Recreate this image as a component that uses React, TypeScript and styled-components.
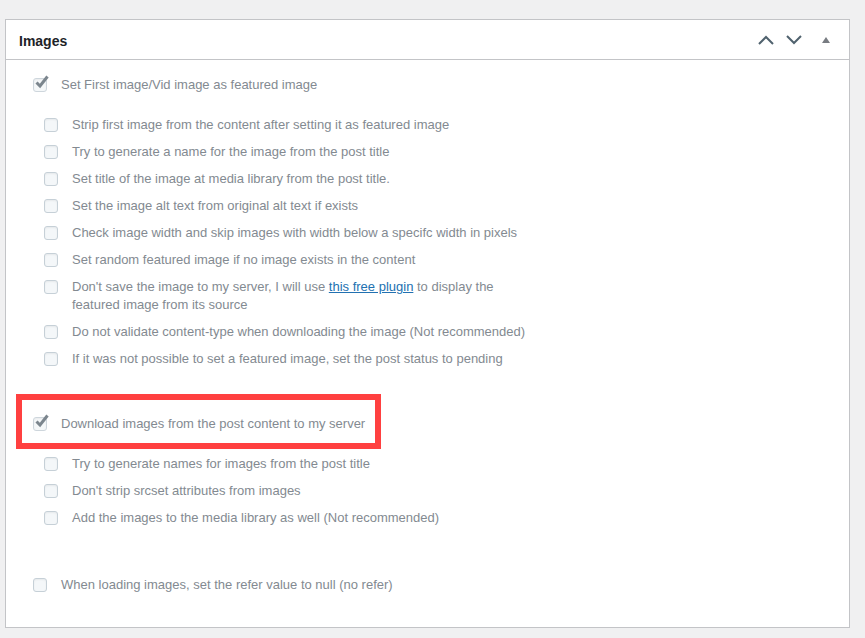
import React, { FC } from "react";
import styled, { createGlobalStyle } from "styled-components";

const GlobalStyle = createGlobalStyle`
    html, body {
        margin: 0;
        padding: 0;
        background: #f0f0f1;
    }
    body {
        font-family: "Liberation Sans", Arial, sans-serif;
    }
`;

const Panel = styled.div`
    margin: 19px 0 0 5px;
    width: 843px;
    height: 607px;
    background: #ffffff;
    border: 1px solid #c3c4c7;
    box-sizing: content-box;
    display: flex;
    flex-direction: column;
`;

const Header = styled.div`
    height: 39px;
    border-bottom: 1px solid #c3c4c7;
    display: flex;
    align-items: center;
    justify-content: space-between;
    padding: 0 14px 0 13px;
`;

const Title = styled.h2`
    margin: 0;
    font-size: 14px;
    font-weight: 700;
    color: #1d2327;
    padding-top: 2px;
`;

const Controls = styled.div`
    display: flex;
    align-items: center;
    gap: 10px;
`;

const IconButton = styled.span<{ $small?: boolean }>`
    display: flex;
    align-items: center;
    justify-content: center;
    width: 18px;
    height: 18px;
    margin-left: ${p => (p.$small ? "4px" : "0")};
`;

const Body = styled.div`
    padding: 16px 0 0 21px;
    display: flex;
    flex-direction: column;
`;

const Section = styled.div<{ $top?: number }>`
    margin-top: ${p => p.$top ?? 0}px;
    display: flex;
    flex-direction: column;
`;

const SubList = styled.div<{ $top?: number }>`
    margin-top: ${p => p.$top ?? 0}px;
    padding-left: 11px;
    display: flex;
    flex-direction: column;
    gap: 9px;
`;

const Highlight = styled.div`
    margin-left: -11px;
    width: 365px;
    box-sizing: border-box;
    border: 6px solid #ff4040;
    padding: 15px 0 10px 5px;
`;

const Row = styled.label`
    display: flex;
    align-items: flex-start;
    gap: 14px;
    padding-left: 6px;
`;

const Box = styled.span<{ $checked?: boolean }>`
    position: relative;
    flex: none;
    width: 12px;
    height: 12px;
    margin-top: 2px;
    border: 1px solid #c6d0d7;
    border-radius: 3px;
    background: #f4f7f9;
    box-shadow: inset 0 1px 2px rgba(0, 0, 0, 0.06);
    opacity: ${p => (p.$checked ? 0.85 : 1)};

    svg {
        position: absolute;
        left: -1px;
        top: -5px;
    }
`;

const Label = styled.span`
    font-size: 13px;
    line-height: 18px;
    color: #838a91;
    max-width: 460px;
`;

const Link = styled.a`
    color: #2271b1;
    text-decoration: underline;
`;

interface OptionData {
    label: React.ReactNode;
    checked?: boolean;
}

const firstSubs: OptionData[] = [
    { label: "Strip first image from the content after setting it as featured image" },
    { label: "Try to generate a name for the image from the post title" },
    { label: "Set title of the image at media library from the post title." },
    { label: "Set the image alt text from original alt text if exists" },
    { label: "Check image width and skip images with width below a specifc width in pixels" },
    { label: "Set random featured image if no image exists in the content" },
    {
        label: (
            <>
                Don't save the image to my server, I will use <Link href="#">this free plugin</Link> to display the featured image from its source
            </>
        ),
    },
    { label: "Do not validate content-type when downloading the image (Not recommended)" },
    { label: "If it was not possible to set a featured image, set the post status to pending" },
];

const downloadSubs: OptionData[] = [
    { label: "Try to generate names for images from the post title" },
    { label: "Don't strip srcset attributes from images" },
    { label: "Add the images to the media library as well (Not recommended)" },
];

const Checkbox: FC<{ checked?: boolean }> = ({ checked }) => (
    <Box $checked={checked}>
        {checked && (
            <svg width="18" height="18" viewBox="0 0 18 18">
                <path d="M3.5 8.5 L7 12 L14.5 2.5" fill="none" stroke="#66727b" strokeWidth="3" strokeLinejoin="miter" />
            </svg>
        )}
    </Box>
);

const Option: FC<OptionData> = ({ label, checked }) => (
    <Row>
        <Checkbox checked={checked} />
        <Label>{label}</Label>
    </Row>
);

const App: FC = () => (
    <>
        <GlobalStyle />
        <Panel>
            <Header>
                <Title>Images</Title>
                <Controls>
                    <IconButton>
                        <svg width="18" height="12" viewBox="0 0 18 12">
                            <polyline points="2,10 9,3 16,10" fill="none" stroke="#50626e" strokeWidth="2" />
                        </svg>
                    </IconButton>
                    <IconButton>
                        <svg width="18" height="12" viewBox="0 0 18 12">
                            <polyline points="2,2 9,9 16,2" fill="none" stroke="#50626e" strokeWidth="2" />
                        </svg>
                    </IconButton>
                    <IconButton $small>
                        <svg width="10" height="8" viewBox="0 0 10 8">
                            <polygon points="1,7 5,1 9,7" fill="#787c82" />
                        </svg>
                    </IconButton>
                </Controls>
            </Header>
            <Body>
                <Section>
                    <Option checked label="Set First image/Vid image as featured image" />
                    <SubList $top={22}>
                        {firstSubs.map((o, i) => (
                            <Option key={i} {...o} />
                        ))}
                    </SubList>
                </Section>
                <Section $top={26}>
                    <Highlight>
                        <Option checked label="Download images from the post content to my server" />
                    </Highlight>
                    <SubList $top={6}>
                        {downloadSubs.map((o, i) => (
                            <Option key={i} {...o} />
                        ))}
                    </SubList>
                </Section>
                <Section $top={49}>
                    <Option label="When loading images, set the refer value to null (no refer)" />
                </Section>
            </Body>
        </Panel>
    </>
);

export default App;
